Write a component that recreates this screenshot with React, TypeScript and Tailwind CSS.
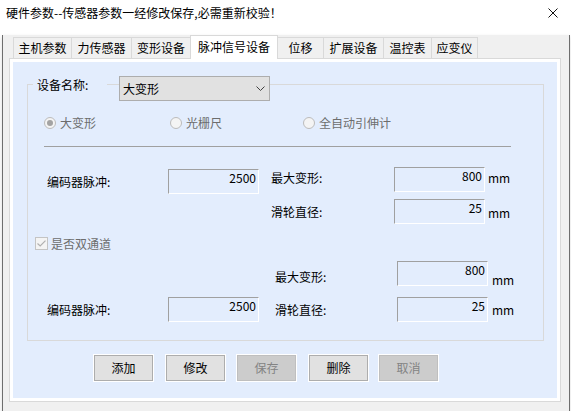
const tabs = [
  { label: "主机参数", cls: "w-[58px] border-l" },
  { label: "力传感器", cls: "w-[60px] border-l" },
  { label: "变形设备", cls: "w-[59px] border-l" },
  { label: "脉冲信号设备", cls: "w-[88px] border-l border-r", active: true },
  { label: "位移", cls: "w-[45px]" },
  { label: "扩展设备", cls: "w-[60px] border-l" },
  { label: "温控表", cls: "w-[48px] border-l" },
  { label: "应变仪", cls: "w-[47px] border-l border-r" },
];

const buttons = [
  { label: "添加", cls: "ml-[67px]" },
  { label: "修改", cls: "ml-[13px]" },
  { label: "保存", cls: "ml-[12px]", disabled: true },
  { label: "删除", cls: "ml-[13px]" },
  { label: "取消", cls: "ml-[11px]", disabled: true },
];

function Field({ value }: { value: string }) {
  return (
    <div className="flex h-[25px] w-[91px] shrink-0 justify-end border-t border-l border-r border-b border-t-[#a0a0a0] border-l-[#a0a0a0] border-r-white border-b-white pr-[2px] leading-[16px]">
      {value}
    </div>
  );
}

function Radio({ checked, label }: { checked?: boolean; label: string }) {
  return (
    <div className="flex items-center">
      <span className="flex h-[12px] w-[12px] items-center justify-center rounded-full border border-[#bcbcbc] bg-[#f4f4f4]">
        {checked && <span className="h-[6px] w-[6px] rounded-full bg-[#a3a3a3]" />}
      </span>
      <span className="ml-[4px] text-[#6d6d6d]">{label}</span>
    </div>
  );
}

export default function App() {
  return (
    <div className="relative h-[411px] w-[571px] overflow-hidden bg-white font-['Microsoft_YaHei','Noto_Sans_CJK_SC',sans-serif] text-[12px] leading-[16px] text-black">
      {/* title bar */}
      <div className="flex h-[26px] items-center justify-between bg-white pl-[6px] pr-[13px]">
        <span>硬件参数--传感器参数一经修改保存,必需重新校验！</span>
        <svg width="10" height="10" viewBox="0 0 10 10">
          <path d="M0.5 0.5 L9.5 9.5 M9.5 0.5 L0.5 9.5" stroke="#111" strokeWidth="1" />
        </svg>
      </div>

      {/* window body */}
      <div className="ml-[2px] h-[383px] w-[568px] border-r border-b border-l border-[#6e6e6e] bg-[#f0f0f0] shadow-[0_2px_4px_rgba(0,0,0,0.15)]">
        {/* tab strip */}
        <div className="mt-[9px] ml-[10px] flex h-[23px] items-end">
          {tabs.map((t) =>
            t.active ? (
              <div
                key={t.label}
                className={`relative z-10 -mb-px flex h-[24px] items-start justify-center border-t border-[#d9d9d9] bg-white pt-[3px] ${t.cls}`}
              >
                {t.label}
              </div>
            ) : (
              <div
                key={t.label}
                className={`flex h-[21px] items-center justify-center border-t border-[#d9d9d9] bg-[#f0f0f0] ${t.cls}`}
              >
                {t.label}
              </div>
            )
          )}
        </div>

        {/* tab page */}
        <div className="ml-[6px] h-[344px] w-[552px] border border-[#d9d9d9] bg-white p-[3px]">
          <div className="h-[336px] w-[544px] bg-[#e3edfd] pt-[22px] pl-[14px]">
            {/* group box */}
            <div className="h-[257px] w-[517px] border border-[#d9d9d9]">
              <div className="-mt-[9px] flex h-[25px]">
                <span className="mt-[1px] ml-[5px] h-[16px] w-[74px] bg-[#e3edfd] pl-[4px]">设备名称:</span>
                <div className="ml-[12px] flex h-[25px] w-[151px] items-center justify-between border border-[#adadad] bg-[#e1e1e1] pr-[4px] pl-[3px]">
                  <span>大变形</span>
                  <svg width="9" height="5" viewBox="0 0 9 5">
                    <polyline points="0.5,0.5 4.5,4.5 8.5,0.5" fill="none" stroke="#404040" strokeWidth="1" />
                  </svg>
                </div>
              </div>

              <div className="mt-[16px] ml-[16px] flex h-[12px] items-center">
                <div className="w-[126px]">
                  <Radio checked label="大变形" />
                </div>
                <div className="w-[133px]">
                  <Radio label="光栅尺" />
                </div>
                <Radio label="全自动引伸计" />
              </div>

              <div className="mt-[17px] ml-[16px] h-px w-[467px] bg-[#a0a0a0]" />

              {/* channel 1 */}
              <div className="mt-[20px] flex items-start">
                <div className="mt-[2px] ml-[19px] flex items-center">
                  <span className="w-[121px]">编码器脉冲:</span>
                  <Field value="2500" />
                </div>
                <div className="ml-[12px] flex flex-col">
                  <div className="flex items-center">
                    <span className="-mt-[4px] w-[123px]">最大变形:</span>
                    <Field value="800" />
                    <span className="-mt-[3px] ml-[3px]">mm</span>
                  </div>
                  <div className="mt-[7px] flex items-center">
                    <span className="w-[123px]">滑轮直径:</span>
                    <Field value="25" />
                    <span className="mt-[2px] ml-[3px]">mm</span>
                  </div>
                </div>
              </div>

              <div className="mt-[13px] ml-[7px] flex h-[13px] items-center">
                <span className="flex h-[13px] w-[13px] items-center justify-center border border-[#c4c4c4] bg-[#f4f4f4]">
                  <svg width="9" height="7" viewBox="0 0 9 7">
                    <polyline points="0.5,3.5 3.2,6 8.5,0.7" fill="none" stroke="#b0b0b0" strokeWidth="1.2" />
                  </svg>
                </span>
                <span className="ml-[3px] text-[#6d6d6d]">是否双通道</span>
              </div>

              {/* channel 2 */}
              <div className="mt-[11px] ml-[247px] flex items-start">
                <span className="mt-[8px] w-[122px]">最大变形:</span>
                <Field value="800" />
                <span className="mt-[11px] ml-[4px]">mm</span>
              </div>
              <div className="mt-[9px] flex items-center">
                <span className="ml-[19px] w-[121px]">编码器脉冲:</span>
                <Field value="2500" />
                <span className="ml-[16px] w-[122px]">滑轮直径:</span>
                <Field value="25" />
                <span className="ml-[4px]">mm</span>
              </div>
            </div>

            {/* buttons */}
            <div className="mt-[14px] flex">
              {buttons.map((b) => (
                <div
                  key={b.label}
                  className={`flex h-[26px] w-[59px] items-center justify-center border shadow-[0_0_0_1px_#ffffff] ${b.cls} ${
                    b.disabled ? "border-[#bfbfbf] bg-[#cccccc] text-[#838383]" : "border-[#adadad] bg-[#e1e1e1]"
                  }`}
                >
                  {b.label}
                </div>
              ))}
            </div>
          </div>
        </div>
      </div>
    </div>
  );
}
